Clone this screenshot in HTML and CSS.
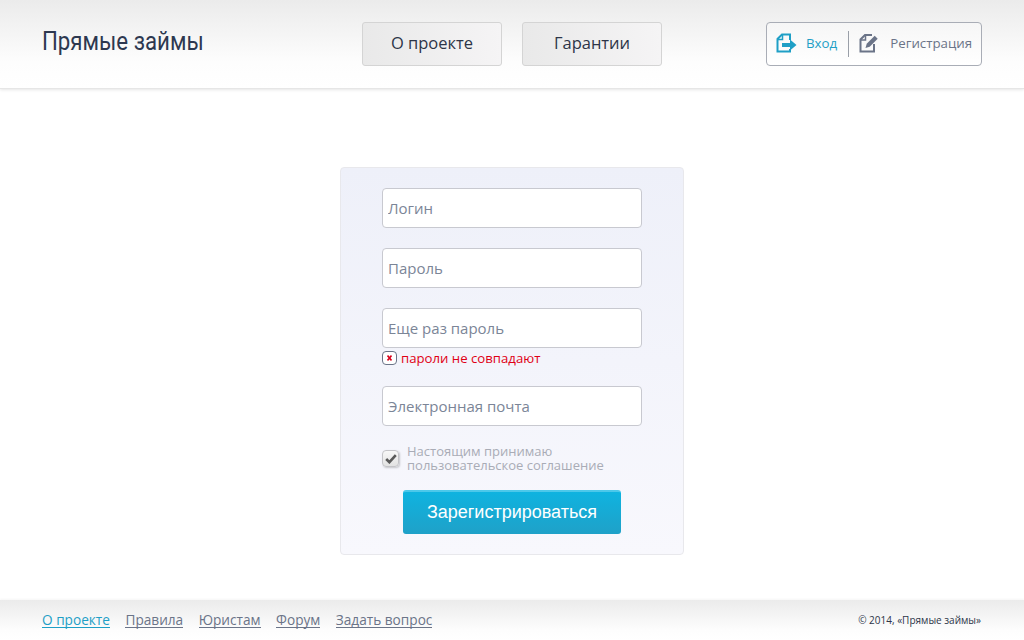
FILE: index.html
```html
<!DOCTYPE html>
<html lang="ru">
<head>
    <meta charset="UTF-8">
    <meta name="viewport" content="width=device-width, initial-scale=1.0">
    <title>Прямые займы</title>
    <link rel="stylesheet" href="styles.css">
</head>
<body>
    <header class="site-header">
        <div class="logo">Прямые займы</div>
        <nav class="main-nav">
            <a class="nav-btn" href="#">О проекте</a>
            <a class="nav-btn" href="#">Гарантии</a>
        </nav>
        <div class="auth-box">
            <a class="auth-link auth-login" href="#">
                <svg class="auth-icon" width="21" height="20" viewBox="0 0 21 20">
                    <path d="M14 7V1.500H6L1.500 6V18.500H14V16" fill="none" stroke="#1f9fc6" stroke-width="2"/>
                    <path d="M6.500 2V6.500H2" fill="none" stroke="#1f9fc6" stroke-width="1.500"/>
                    <path d="M6 10h8V6.500l6.500 5.500-6.500 5.500V14H6z" fill="#1f9fc6"/>
                </svg>
                <span>Вход</span>
            </a>
            <span class="auth-sep"></span>
            <a class="auth-link auth-reg" href="#">
                <svg class="auth-icon" width="21" height="20" viewBox="0 0 21 20">
                    <path d="M13 2H6L1.500 6.500V18.500H15V11" fill="none" stroke="#6b7488" stroke-width="2"/>
                    <path d="M6.500 2.500V7H2" fill="none" stroke="#6b7488" stroke-width="1.500"/>
                    <path d="M6.500 15l1.200-4.200 8-8 3 3-8 8z" fill="#6b7488"/>
                </svg>
                <span>Регистрация</span>
            </a>
        </div>
    </header>

    <main class="content">
        <form class="reg-form">
            <input class="field" type="text" placeholder="Логин">
            <input class="field" type="password" placeholder="Пароль">
            <div class="field-group">
                <input class="field" type="password" placeholder="Еще раз пароль">
                <div class="field-error">
                    <span class="error-icon">
                        <svg width="5" height="6" viewBox="0 0 5 6">
                            <path d="M0.500 0.500l4 5M4.500 0.500l-4 5" stroke="#d8001a" stroke-width="1.600"/>
                        </svg>
                    </span>
                    <span>пароли не совпадают</span>
                </div>
            </div>
            <input class="field" type="email" placeholder="Электронная почта">
            <label class="agree">
                <span class="agree-box">
                    <svg width="12" height="10" viewBox="0 0 12 10">
                        <path d="M1.200 5l3.200 3.200 6.400-7" fill="none" stroke="#5a5a5a" stroke-width="2.600"/>
                    </svg>
                </span>
                <span class="agree-text">Настоящим принимаю<br>пользовательское соглашение</span>
            </label>
            <button class="submit-btn" type="button">Зарегистрироваться</button>
        </form>
    </main>

    <footer class="site-footer">
        <nav class="footer-nav">
            <a class="active" href="#">О проекте</a>
            <a href="#">Правила</a>
            <a href="#">Юристам</a>
            <a href="#">Форум</a>
            <a href="#">Задать вопрос</a>
        </nav>
        <div class="copyright">© 2014, «Прямые займы»</div>
    </footer>
</body>
</html>
```

FILE: styles.css
```css
* {
    box-sizing: border-box;
}
body {
    margin: 0;
    height: 640px;
    display: flex;
    flex-direction: column;
    overflow: hidden;
    background: #fff;
    font-family: "Open Sans", sans-serif;
    color: #2d3548;
}
a {
    text-decoration: none;
}

/* header */
.site-header {
    height: 89px;
    flex: none;
    display: flex;
    align-items: center;
    padding: 0 42px 1px;
    background: linear-gradient(to bottom, #ebebeb 0, #fdfdfd 62px, #fff 88px);
    border-bottom: 1px solid #e6e6e6;
    box-shadow: 0 1px 3px rgba(0, 0, 0, 0.1);
}
.logo {
    width: 320px;
    font-family: Roboto, sans-serif;
    font-size: 25px;
    color: #2d3850;
    margin-bottom: 4px;
    white-space: nowrap;
    transform: scaleX(0.89);
    transform-origin: left center;
}
.main-nav {
    display: flex;
    gap: 20px;
}
.nav-btn {
    width: 140px;
    height: 44px;
    display: flex;
    align-items: center;
    justify-content: center;
    padding-bottom: 2px;
    font-size: 16.500px;
    color: #2d3548;
    background: linear-gradient(to right, #e9e9e9, #f5f4f5);
    border: 1px solid #d4d4d4;
    border-radius: 3px;
}
.auth-box {
    margin-left: 104px;
    width: 216px;
    height: 44px;
    display: flex;
    align-items: center;
    padding-left: 9px;
    background: linear-gradient(to bottom, #f6f6f6, #fff);
    border: 1px solid #a9adb6;
    border-radius: 4px;
}
.auth-link {
    display: flex;
    align-items: center;
    font-size: 13.300px;
    padding-bottom: 1px;
}
.auth-login {
    color: #1f9fc6;
    gap: 9px;
}
.auth-reg {
    color: #6b7488;
    gap: 10px;
}
.auth-sep {
    width: 1px;
    height: 26px;
    margin: 0 10px 0 11px;
    background: #9a9fa8;
}

/* form */
.content {
    flex: 1;
    display: flex;
    justify-content: center;
    align-items: flex-start;
    padding-top: 78px;
}
.reg-form {
    width: 344px;
    height: 388px;
    display: flex;
    flex-direction: column;
    align-items: flex-start;
    gap: 20px;
    padding: 20px 41px 0;
    background: linear-gradient(to bottom, #eef0f9, #f8f8fd);
    border: 1px solid #e8e8ec;
    border-radius: 4px;
}
.field {
    width: 260px;
    height: 40px;
    padding: 0 5px;
    font-family: "Open Sans", sans-serif;
    font-size: 15px;
    color: #2d3548;
    background: #fff;
    border: 1px solid #c8c9d0;
    border-radius: 4px;
    outline: none;
}
.field::placeholder {
    color: #7b8597;
    opacity: 1;
}
.field-group {
    height: 58px;
}
.field-error {
    display: flex;
    align-items: center;
    gap: 4px;
    height: 20px;
    font-size: 13.200px;
    color: #e00015;
}
.error-icon {
    width: 15px;
    height: 14px;
    display: flex;
    align-items: center;
    justify-content: center;
    background: #fff;
    border: 1px solid #6b7488;
    border-radius: 4px;
}
.agree {
    display: flex;
    gap: 8px;
    margin-top: -2px;
    font-size: 13px;
    line-height: 14px;
    color: #a9acb6;
}
.agree-box {
    width: 17px;
    height: 17px;
    margin-top: 6px;
    display: flex;
    align-items: center;
    justify-content: center;
    background: linear-gradient(to bottom, #f8f8f8, #e2e2e2);
    border: 1px solid #c4c4c8;
    border-radius: 4px;
    box-shadow: 1px 1px 2px rgba(0, 0, 0, 0.2);
}
.submit-btn {
    width: 218px;
    height: 44px;
    margin: -2px 0 0 21px;
    padding-bottom: 3px;
    font-family: "Liberation Sans", sans-serif;
    font-size: 18px;
    color: #fff;
    background: linear-gradient(to bottom, #0fb3e0, #1fa1c8);
    border: none;
    border-top: 2px solid #4cc8ea;
    border-radius: 3px;
}

/* footer */
.site-footer {
    height: 40px;
    flex: none;
    display: flex;
    align-items: center;
    justify-content: space-between;
    padding: 0 43px 0 42px;
    background: linear-gradient(to bottom, #ebebeb, #fdfdfd 30px, #fff);
    box-shadow: 0 -1px 2px rgba(0, 0, 0, 0.04);
}
.footer-nav {
    display: flex;
    gap: 15.500px;
}
.footer-nav a {
    font-size: 13.650px;
    line-height: 15px;
    color: #6b7488;
    border-bottom: 1px solid #6b7488;
}
.footer-nav a.active {
    color: #1f9fc6;
    border-bottom-color: #1f9fc6;
}
.copyright {
    font-size: 10px;
    color: #2d3548;
}
```
